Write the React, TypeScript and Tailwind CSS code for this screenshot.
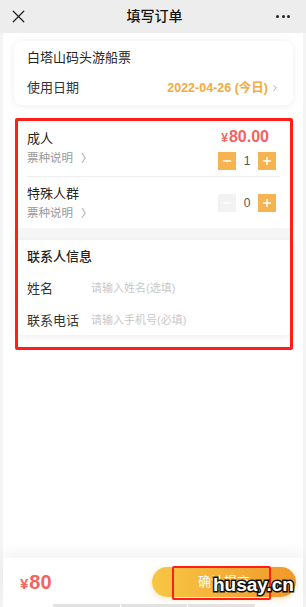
import { X, ChevronRight, Minus, Plus } from 'lucide-react';

const font = { fontFamily: '"Liberation Sans", "Noto Sans CJK SC", sans-serif' };

function Stepper({ count, disabled }: { count: number; disabled?: boolean }) {
  return (
    <div className="flex items-center pr-[4px]">
      <div
        className={
          disabled
            ? 'flex h-[18px] w-[18px] items-center justify-center bg-[#f2f2f2] text-white'
            : 'flex h-[18px] w-[18px] items-center justify-center bg-[#f6b352] text-white'
        }
      >
        <Minus className="h-3 w-3" strokeWidth={3} />
      </div>
      <span className="w-[22px] text-center text-[12px] text-[#555]">{count}</span>
      <div className="flex h-[18px] w-[18px] items-center justify-center bg-[#f6b352] text-white">
        <Plus className="h-3 w-3" strokeWidth={3} />
      </div>
    </div>
  );
}

export default function App() {
  return (
    <div className="relative flex h-[607px] w-[306px] flex-col overflow-hidden bg-[#f4f4f4]" style={font}>
      {/* Top nav */}
      <div className="flex h-[33px] shrink-0 items-center justify-between bg-[#ededed] pl-[8px] pr-[16px]">
        <X className="h-[21px] w-[21px] text-[#222]" strokeWidth={1.5} />
        <span className="pl-[4px] text-[14px] font-medium text-[#111]">填写订单</span>
        <span className="flex items-center gap-[2.5px]">
          <span className="h-[3px] w-[3px] rounded-full bg-[#222]" />
          <span className="h-[3px] w-[3px] rounded-full bg-[#222]" />
          <span className="h-[3px] w-[3px] rounded-full bg-[#222]" />
        </span>
      </div>

      <div className="mx-[3px] flex flex-1 flex-col bg-white">
        {/* Ticket + date */}
        <div className="ml-[11px] mr-[10px] mt-[8px] flex h-[64px] flex-col justify-center gap-[12px] rounded-lg bg-white px-[13px] shadow-[0_1px_8px_rgba(0,0,0,0.07)]">
          <div className="text-[13px] leading-[18px] text-[#222]">白塔山码头游船票</div>
          <div className="flex items-center justify-between">
            <span className="text-[13px] leading-[18px] text-[#333]">使用日期</span>
            <span className="flex items-center">
              <span className="text-[12.5px] font-bold text-[#f5a93f]">2022-04-26 (今日)</span>
              <ChevronRight className="ml-[2px] h-[10px] w-[10px] text-[#999]" />
            </span>
          </div>
        </div>

        {/* Tickets */}
        <div className="ml-[11px] mr-[10px] mt-[14px] rounded-t-lg bg-white px-[13px] shadow-[0_1px_8px_rgba(0,0,0,0.06)]">
          <div className="flex h-[58px] items-center justify-between border-b border-[#eeeeee]">
            <div className="flex flex-col gap-[3px]">
              <span className="text-[13px] leading-[17px] text-[#222]">成人</span>
              <span className="flex items-center text-[11.5px] leading-[16px] text-[#999]">
                票种说明
                <span className="ml-[8px] text-[11px]">〉</span>
              </span>
            </div>
            <div className="flex flex-col items-end gap-[5px] pt-[2px]">
              <span className="flex items-baseline pr-[11px] font-bold leading-[18px] text-[#f56262]">
                <span className="mr-[1px] text-[12px]">¥</span>
                <span className="text-[16px]">80.00</span>
              </span>
              <Stepper count={1} />
            </div>
          </div>
          <div className="flex h-[51px] items-center justify-between">
            <div className="flex flex-col gap-[3px]">
              <span className="text-[13px] leading-[17px] text-[#222]">特殊人群</span>
              <span className="flex items-center text-[11.5px] leading-[16px] text-[#999]">
                票种说明
                <span className="ml-[8px] text-[11px]">〉</span>
              </span>
            </div>
            <Stepper count={0} disabled />
          </div>
        </div>

        <div className="ml-[11px] mr-[10px] h-[12px] bg-[#f6f6f6]" />

        {/* Contact */}
        <div className="ml-[11px] mr-[10px] flex h-[95px] flex-col rounded-b-lg bg-white px-[13px] pt-[8px] shadow-[0_2px_8px_rgba(0,0,0,0.07)]">
          <div className="flex h-[17px] items-center text-[13px] font-medium text-[#222]">联系人信息</div>
          <div className="mt-[15px] flex h-[17px] items-center">
            <span className="w-[64px] text-[13px] text-[#333]">姓名</span>
            <span className="text-[11px] text-[#c8c8c8]">请输入姓名(选填)</span>
          </div>
          <div className="mt-[15px] flex h-[17px] items-center">
            <span className="w-[64px] text-[13px] text-[#333]">联系电话</span>
            <span className="text-[11px] text-[#c8c8c8]">请输入手机号(必填)</span>
          </div>
        </div>

        <div className="flex-1" />

        {/* Bottom bar */}
        <div className="flex h-[49px] shrink-0 flex-col bg-white shadow-[0_-6px_12px_rgba(0,0,0,0.05)]">
          <div className="flex items-center justify-between pl-[17px] pr-[7px] pt-[9px]">
            <span className="flex items-baseline font-bold text-[#f56262]">
              <span className="mr-[1px] text-[15px]">¥</span>
              <span className="text-[20px]">80</span>
            </span>
            <div className="flex h-[30px] w-[144px] items-center justify-center rounded-full bg-gradient-to-r from-[#f6c744] to-[#f2982b] shadow-[0_2px_6px_rgba(245,170,60,0.3)]">
              <span className="text-[13px] text-white">确认提交</span>
            </div>
          </div>
          <div className="mt-[7px] flex h-[3px] pl-[50px]">
            <div className="w-[67px] bg-[#e2e2e2]" />
            <div className="ml-[1px] w-[66px] bg-[#e2e2e2]" />
            <div className="ml-[1px] w-[67px] bg-[#e2e2e2]" />
          </div>
        </div>
      </div>

      {/* Annotation boxes and watermark */}
      <div className="pointer-events-none absolute left-[15px] top-[118px] h-[232px] w-[278px] rounded-[2px] border-[3px] border-[#ff1f1a]" />
      <div className="pointer-events-none absolute left-[172px] top-[566px] h-[34px] w-[99px] rounded-[2px] border-[2px] border-[#ff1f1a]" />
      <span
        className="pointer-events-none absolute left-[213px] top-[574px] text-[19px] font-bold leading-[22px] text-white [-webkit-text-stroke:3px_#111] [paint-order:stroke_fill]"
        style={{ fontFamily: '"Liberation Sans", Arial, sans-serif' }}
      >
        husay.cn
      </span>
    </div>
  );
}
